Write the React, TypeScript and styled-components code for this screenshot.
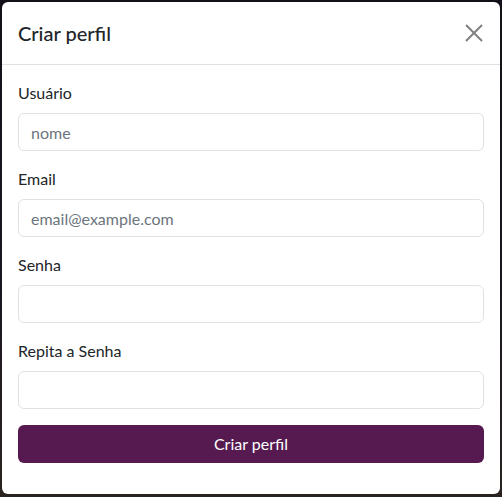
import React from "react";
import styled, { createGlobalStyle } from "styled-components";

const Global = createGlobalStyle`
  html, body { margin: 0; padding: 0; }
  body {
    background: #16121a;
    font-family: "Segoe UI", Lato, "Open Sans", sans-serif;
    color: #212529;
  }
  * { box-sizing: border-box; }
`;

const Backdrop = styled.div`
  width: 502px;
  height: 497px;
  padding: 2px 2px 3px 2px;
  background: linear-gradient(180deg, #141018 0%, #1b1720 60%, #2a2420 100%);
`;

const Modal = styled.div`
  width: 498px;
  height: 492px;
  background: #fff;
  border-radius: 6px;
  display: flex;
  flex-direction: column;
  overflow: hidden;
`;

const Header = styled.div`
  display: flex;
  align-items: center;
  justify-content: space-between;
  height: 63px;
  padding: 0 16px;
  border-bottom: 1px solid #dee2e6;
`;

const Title = styled.h1`
  margin: 0;
  font-size: 20px;
  font-weight: 500;
  line-height: 30px;
  color: #212529;
`;

const CloseButton = styled.button`
  width: 24px;
  height: 24px;
  padding: 0;
  border: 0;
  background: transparent;
  display: flex;
  align-items: center;
  justify-content: center;
  cursor: pointer;
  margin-right: -2px;
`;

const Body = styled.form`
  padding: 16px;
  display: flex;
  flex-direction: column;
`;

const Field = styled.div`
  display: flex;
  flex-direction: column;
  margin-bottom: 16px;
`;

const Label = styled.label`
  font-size: 16px;
  line-height: 24px;
  margin-bottom: 8px;
  color: #212529;
`;

const Input = styled.input`
  height: 38px;
  width: 100%;
  padding: 6px 12px;
  font-family: inherit;
  font-size: 16px;
  line-height: 24px;
  color: #212529;
  border: 1px solid #dee2e6;
  border-radius: 6px;
  background: #fff;
  outline: none;
  &::placeholder {
    color: #6c757d;
    opacity: 1;
  }
`;

const Submit = styled.button`
  height: 38px;
  width: 100%;
  border: 0;
  border-radius: 6px;
  background: #561a50;
  color: #fff;
  font-family: inherit;
  font-size: 16px;
  line-height: 24px;
  cursor: pointer;
`;

const fields = [
  { label: "Usuário", type: "text", placeholder: "nome" },
  { label: "Email", type: "email", placeholder: "email@example.com" },
  { label: "Senha", type: "password", placeholder: "" },
  { label: "Repita a Senha", type: "password", placeholder: "" },
];

export default function App() {
  return (
    <>
      <Global />
      <Backdrop>
        <Modal>
          <Header>
            <Title>Criar perfil</Title>
            <CloseButton aria-label="Fechar">
              <svg width="18" height="18" viewBox="0 0 18 18">
                <path d="M1 1L17 17M17 1L1 17" stroke="#808080" strokeWidth="2" />
              </svg>
            </CloseButton>
          </Header>
          <Body onSubmit={(e) => e.preventDefault()}>
            {fields.map((f) => (
              <Field key={f.label}>
                <Label>{f.label}</Label>
                <Input type={f.type} placeholder={f.placeholder} />
              </Field>
            ))}
            <Submit type="submit">Criar perfil</Submit>
          </Body>
        </Modal>
      </Backdrop>
    </>
  );
}
